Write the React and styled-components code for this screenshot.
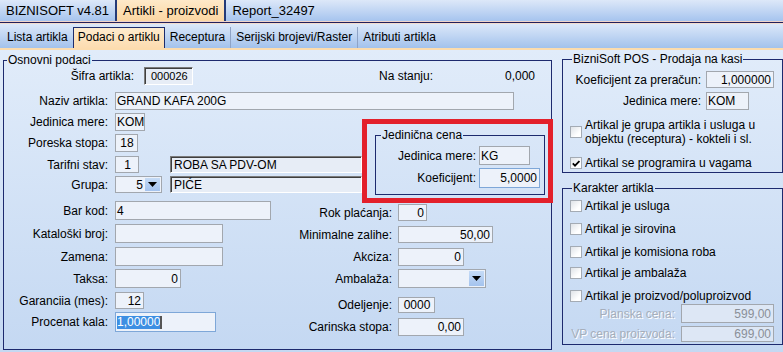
import React from 'react';
import styled, { createGlobalStyle } from 'styled-components';

const Global = createGlobalStyle`
  html, body { margin: 0; padding: 0; }
  body {
    width: 783px; height: 352px; overflow: hidden;
    font-family: "Liberation Sans", Arial, sans-serif;
    font-size: 12px; color: #000;
  }
  * { box-sizing: border-box; }
`;

const Screen = styled.div`
  width: 783px; height: 352px; display: flex; flex-direction: column; overflow: hidden;
`;

const TopBar = styled.div`
  height: 21px; flex: none; display: flex;
  background: linear-gradient(#dde8f9, #a6c4ee);
`;
const TopTab = styled.div`
  display: flex; align-items: center; padding: 0 6px 0 6px;
  font-size: 13px; white-space: nowrap;
  border-right: ${p => (p.$last ? 'none' : '2px solid #243a78')};
  background: ${p => (p.$active ? 'linear-gradient(#fee9c9, #fbd6a2)' : 'transparent')};
`;
const Rule = styled.div`
  height: 3px; flex: none;
  background: linear-gradient(#efd3c8 0 1px, #23205c 1px 2px, #f3dccd 2px 3px);
`;
const SubBar = styled.div`
  height: 24px; flex: none; display: flex; align-items: stretch;
  background: linear-gradient(#dce8f9, #a3c2ec);
`;
const SubTab = styled.div`
  display: flex; align-items: center; white-space: nowrap;
  padding: 0 ${p => (p.$active ? 4 : 5)}px 0 ${p => (p.$first ? 7 : p.$active ? 4 : 5)}px;
  margin-top: 3px;
  border: ${p => (p.$active ? '1px solid #1d2c6c' : 'none')};
  border-bottom: none;
  border-right: ${p => (p.$active ? '1px solid #1d2c6c' : p.$sep ? '1px solid #8ea3c6' : 'none')};
  background: ${p => (p.$active ? 'linear-gradient(#feebcd, #fcdcb0)' : 'transparent')};
  padding-bottom: 2px;
`;
const Peach = styled.div`
  height: 2px; flex: none; background: #fcdcae;
`;

const Content = styled.div`
  flex: 1; display: flex; align-items: flex-start; gap: 10px;
  padding: 3px 1px 0 3px;
  background: linear-gradient(#e1ecfa, #c4d8f2);
`;

const Group = styled.fieldset`
  margin: ${p => p.$mt || 0}px 0 0 0; padding: 0 ${p => p.$pr || 0}px 0 ${p => p.$pl || 0}px;
  min-width: 0; width: ${p => p.$w}px; height: ${p => p.$h}px;
  border: 1px solid #1d2a6e; flex: none;
  display: flex; flex-direction: column;
`;
const Legend = styled.legend`
  padding: 0 1px; margin-left: ${p => p.$ml ?? 3}px;
  font-size: 12px; line-height: 14px; white-space: nowrap;
`;

const Column = styled.div`
  display: flex; flex-direction: column; position: relative;
`;
const Split = styled.div`
  display: flex; align-items: flex-start; margin-top: ${p => p.$mt || 0}px;
`;

const Field = styled.div`
  display: flex; align-items: center; flex: none;
  height: ${p => p.$h || 18}px;
  margin-top: ${p => p.$mt || 0}px;
`;
const Label = styled.span`
  flex: none; width: ${p => p.$w}px; margin-right: ${p => p.$gap ?? 7}px;
  text-align: right; white-space: nowrap;
  color: ${p => (p.$disabled ? '#a6aebb' : '#000')};
  text-shadow: ${p => (p.$disabled ? '1px 1px 0 #ffffff' : 'none')};
`;
const Input = styled.div`
  flex: none; width: ${p => p.$w}px; height: 100%;
  border: 1px solid ${p => (p.$focus ? '#7ea7d8' : '#a2a7ae')};
  background: ${p => (p.$disabled ? '#dde7f5' : '#edf2fa')};
  color: ${p => (p.$disabled ? '#8a8f98' : '#000')};
  display: flex; align-items: center; white-space: nowrap; overflow: hidden;
  justify-content: ${p => (p.$align === 'right' ? 'flex-end' : p.$align === 'center' ? 'center' : 'flex-start')};
  padding: 0 ${p => (p.$align === 'right' ? 2 : 0)}px 0 1px;
`;
const Sunken = styled.div`
  flex: none; width: ${p => p.$w}px; height: 100%;
  margin-left: ${p => p.$ml || 0}px;
  border-top: 1px solid #7b7b7b; border-left: 1px solid #7b7b7b;
  border-bottom: 1px solid #ffffff; border-right: 1px solid #ffffff;
  box-shadow: inset 1px 1px 0 #3f3f3f;
  background: #e7edf6;
  display: flex; align-items: center; padding-left: ${p => p.$pl ?? 3}px;
  font-size: ${p => p.$fs || 12}px; white-space: nowrap; overflow: hidden;
`;
const Selected = styled.span`
  background: #3d8fe3; color: #fff; line-height: 13px;
`;
const Caret = styled.span`
  width: 2px; height: 13px; background: #555;
`;
const Combo = styled.div`
  flex: none; width: ${p => p.$w}px; height: 100%;
  border: 1px solid #a2a7ae; background: #edf2fa;
  display: flex; align-items: center; justify-content: flex-end; padding: 1px;
`;
const ComboValue = styled.span`
  padding-right: 2px;
`;
const DropButton = styled.span`
  width: 15px; height: 100%; flex: none;
  background: linear-gradient(#c5dbf6, #a4c3ee);
  display: flex; align-items: center; justify-content: center;
`;
const Arrow = () => (
  <svg width="9" height="5" viewBox="0 0 9 5"><path d="M0 0h9L4.5 5z" fill="#000" /></svg>
);

const Stock = styled.div`
  margin-left: auto; margin-right: 16px; width: 156px;
  display: flex; justify-content: space-between;
`;

const Marker = styled.div`
  position: absolute; left: 358px; top: 52px; width: 191px; height: 84px;
  border: 5px solid #e3202b; padding: 4px 4px 4px 8px;
  display: flex;
`;

const RightCol = styled.div`
  display: flex; flex-direction: column; gap: 8px; width: 221px; flex: none;
`;

const Check = styled.div`
  display: flex; align-items: center; gap: 3px;
  margin-top: ${p => p.$mt || 0}px; min-height: 14px; line-height: 14px;
  color: ${p => (p.$disabled ? '#a6aebb' : '#000')};
`;
const Box = styled.span`
  width: 12px; height: 12px; flex: none; border: 1px solid #a4abb4;
  background: linear-gradient(135deg, #dfe3e8, #ffffff 70%);
  display: flex; align-items: center; justify-content: center;
`;
const CheckText = styled.span`
  width: ${p => (p.$w ? p.$w + 'px' : 'auto')};
`;
const Tick = () => (
  <svg width="8" height="7" viewBox="0 0 8 7"><path d="M0.8 3.4l2.2 2.2 4.4-4.6" stroke="#000" strokeWidth="1.8" fill="none" /></svg>
);

function CheckRow({ checked, children, mt, w }) {
  return (
    <Check $mt={mt}>
      <Box>{checked && <Tick />}</Box>
      <CheckText $w={w}>{children}</CheckText>
    </Check>
  );
}

export default function App() {
  return (
    <Screen>
      <Global />
      <TopBar>
        <TopTab>BIZNISOFT v4.81</TopTab>
        <TopTab $active>Artikli - proizvodi</TopTab>
        <TopTab $last>Report_32497</TopTab>
      </TopBar>
      <Rule />
      <SubBar>
        <SubTab $first>Lista artikla</SubTab>
        <SubTab $active>Podaci o artiklu</SubTab>
        <SubTab $sep>Receptura</SubTab>
        <SubTab $sep>Serijski brojevi/Raster</SubTab>
        <SubTab>Atributi artikla</SubTab>
      </SubBar>
      <Peach />
      <Content>
        <Group $w={549} $h={297}>
          <Legend>Osnovni podaci</Legend>
          <Column>
            <Field $h={18}>
              <Label $w={130} $gap={10}>Šifra artikla:</Label>
              <Sunken $w={49} $fs={11} $pl={6}>000026</Sunken>
              <Stock><span>Na stanju:</span><span>0,000</span></Stock>
            </Field>
            <Field $h={18} $mt={7}>
              <Label $w={104}>Naziv artikla:</Label>
              <Input $w={399}>GRAND KAFA 200G</Input>
            </Field>
            <Field $h={18} $mt={3}>
              <Label $w={104}>Jedinica mere:</Label>
              <Input $w={30}>KOM</Input>
            </Field>
            <Field $h={18} $mt={3}>
              <Label $w={104}>Poreska stopa:</Label>
              <Input $w={23} $align="center">18</Input>
            </Field>
            <Field $h={17} $mt={4}>
              <Label $w={104}>Tarifni stav:</Label>
              <Input $w={24} $align="center">1</Input>
              <Sunken $w={192} $ml={31}>ROBA SA PDV-OM</Sunken>
            </Field>
            <Field $h={17} $mt={3}>
              <Label $w={104}>Grupa:</Label>
              <Combo $w={47}><ComboValue>5</ComboValue><DropButton><Arrow /></DropButton></Combo>
              <Sunken $w={192} $ml={8}>PIĆE</Sunken>
            </Field>
            <Split $mt={8}>
              <Column>
                <Field $h={19}>
                  <Label $w={104}>Bar kod:</Label>
                  <Input $w={156}>4</Input>
                </Field>
                <Field $h={19} $mt={4}>
                  <Label $w={104}>Kataloški broj:</Label>
                  <Input $w={108} />
                </Field>
                <Field $h={19} $mt={4}>
                  <Label $w={104}>Zamena:</Label>
                  <Input $w={108} />
                </Field>
                <Field $h={19} $mt={3}>
                  <Label $w={104}>Taksa:</Label>
                  <Input $w={66} $align="right">0</Input>
                </Field>
                <Field $h={17} $mt={4}>
                  <Label $w={104}>Garanciia (mes):</Label>
                  <Input $w={29} $align="right">12</Input>
                </Field>
                <Field $h={20} $mt={3}>
                  <Label $w={104}>Procenat kala:</Label>
                  <Input $w={101} $focus><Selected>1,00000</Selected><Caret /></Input>
                </Field>
              </Column>
              <Column>
                <Field $h={17} $mt={3}>
                  <Label $w={121} $gap={6}>Rok plaćanja:</Label>
                  <Input $w={29} $align="right">0</Input>
                </Field>
                <Field $h={17} $mt={5}>
                  <Label $w={121} $gap={6}>Minimalne zalihe:</Label>
                  <Input $w={95} $align="right">50,00</Input>
                </Field>
                <Field $h={18} $mt={5}>
                  <Label $w={121} $gap={6}>Akciza:</Label>
                  <Input $w={66} $align="right">0</Input>
                </Field>
                <Field $h={19} $mt={3}>
                  <Label $w={121} $gap={6}>Ambalaža:</Label>
                  <Combo $w={88}><DropButton><Arrow /></DropButton></Combo>
                </Field>
                <Field $h={16} $mt={9}>
                  <Label $w={121} $gap={6}>Odeljenje:</Label>
                  <Input $w={37} $align="center">0000</Input>
                </Field>
                <Field $h={18} $mt={5}>
                  <Label $w={121} $gap={6}>Carinska stopa:</Label>
                  <Input $w={66} $align="right">0,00</Input>
                </Field>
              </Column>
            </Split>
            <Marker>
              <Group $w={170} $h={67}>
                <Legend $ml={5}>Jedinična cena</Legend>
                <Field $h={19} $mt={4}>
                  <Label $w={100} $gap={3}>Jedinica mere:</Label>
                  <Input $w={51}>KG</Input>
                </Field>
                <Field $h={20} $mt={3}>
                  <Label $w={100} $gap={3}>Koeficijent:</Label>
                  <Input $w={61} $align="right" $focus>5,0000</Input>
                </Field>
              </Group>
            </Marker>
          </Column>
        </Group>
        <RightCol>
          <Group $w={221} $h={121} $mt={-1} $pl={7}>
            <Legend $ml={2}>BizniSoft POS - Prodaja na kasi</Legend>
            <Field $h={17} $mt={5}>
              <Label $w={131} $gap={5}>Koeficijent za preračun:</Label>
              <Input $w={68} $align="right">1,000000</Input>
            </Field>
            <Field $h={18} $mt={4}>
              <Label $w={131} $gap={5}>Jedinica mere:</Label>
              <Input $w={43}>KOM</Input>
            </Field>
            <CheckRow mt={8} w={185}>Artikal je grupa artikla i usluga u objektu (receptura) - kokteli i sl.</CheckRow>
            <CheckRow mt={10} checked>Artikal se programira u vagama</CheckRow>
          </Group>
          <Group $w={221} $h={164} $pl={7}>
            <Legend $ml={2}>Karakter artikla</Legend>
            <CheckRow mt={4}>Artikal je usluga</CheckRow>
            <CheckRow mt={9}>Artikal je sirovina</CheckRow>
            <CheckRow mt={9}>Artikal je komisiona roba</CheckRow>
            <CheckRow mt={7}>Artikal je ambalaža</CheckRow>
            <CheckRow mt={9}>Artikal je proizvod/poluproizvod</CheckRow>
            <Field $h={19} $mt={1}>
              <Label $w={105} $gap={6} $disabled>Planska cena:</Label>
              <Input $w={93} $align="right" $disabled>599,00</Input>
            </Field>
            <Field $h={16} $mt={3}>
              <Label $w={105} $gap={6} $disabled>VP cena proizvoda:</Label>
              <Input $w={93} $align="right" $disabled>699,00</Input>
            </Field>
          </Group>
        </RightCol>
      </Content>
    </Screen>
  );
}
